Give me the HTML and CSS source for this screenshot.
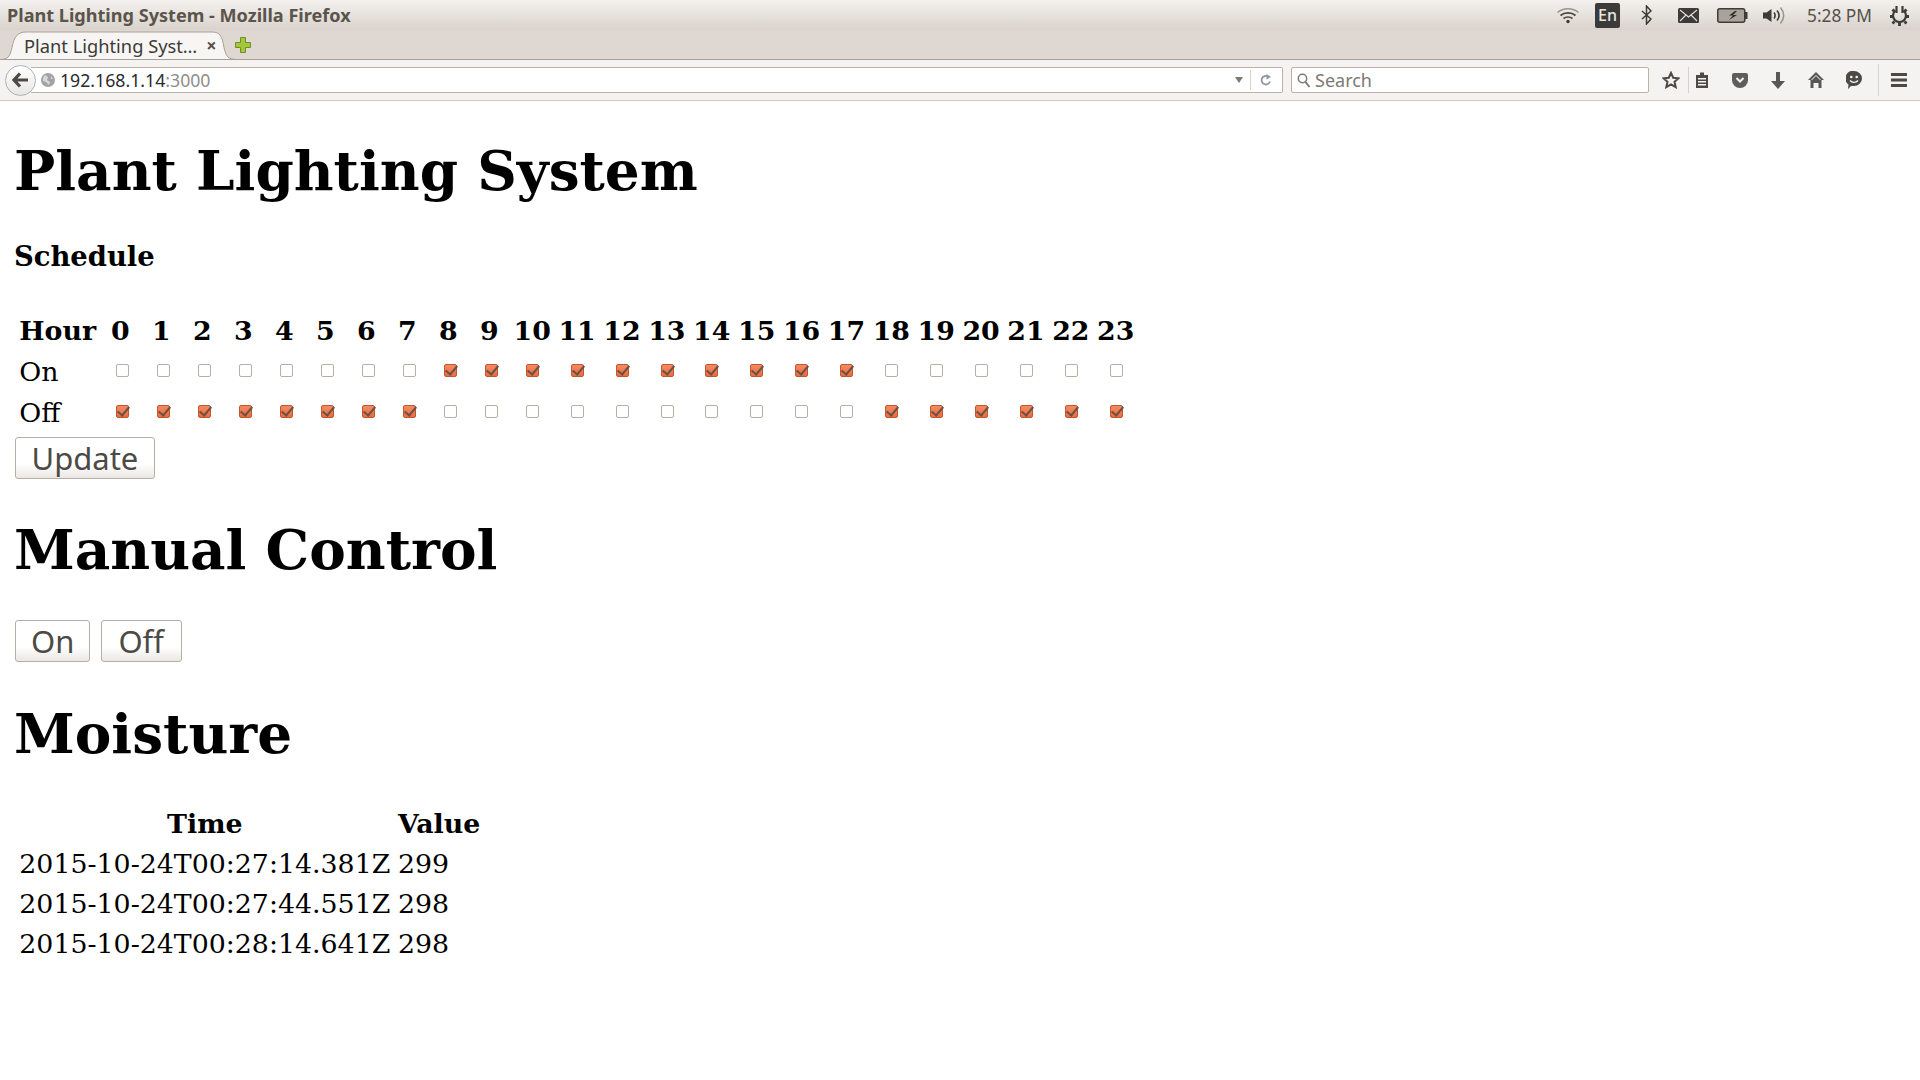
FILE: index.html
```html
<!DOCTYPE html>
<html lang="en">
<head>
<meta charset="utf-8">
<title>Plant Lighting System</title>
<link rel="stylesheet" href="styles.css">
</head>
<body>
<header class="chrome">
  <div class="titlebar">
    <span class="wintitle">Plant Lighting System - Mozilla Firefox</span>
    <div class="tray">
      <svg class="ti wifi" width="24" height="18" viewBox="0 0 24 18"><path d="M1.500 6.500C7 1.500 17 1.500 22.500 6.500" fill="none" stroke="#9a948c" stroke-width="1.600"/><g fill="none" stroke="#4a4641" stroke-width="1.700"><path d="M4.500 9.500C8.500 6 15.500 6 19.500 9.500"/><path d="M7.500 12.500C10 10.500 14 10.500 16.500 12.500"/></g><circle cx="12" cy="15.500" r="1.700" fill="#3c3b37"/></svg>
      <span class="lang">En</span>
      <svg class="ti bt" width="11" height="20" viewBox="0 0 11 20"><path d="M1 6l9 8-4.500 5V1L10 6l-9 8" fill="none" stroke="#3c3b37" stroke-width="1.500"/></svg>
      <svg class="ti mail" width="21" height="15" viewBox="0 0 21 15"><rect width="21" height="15" rx="1.500" fill="#3c3b37"/><path d="M2 2l8.500 7L19 2M2 13l6-6M19 13l-6-6" fill="none" stroke="#e6e1dc" stroke-width="1.100"/></svg>
      <svg class="ti batt" width="31" height="15" viewBox="0 0 31 15"><rect x=".75" y=".75" width="27" height="13.500" rx="2" fill="#a8a29a" stroke="#3c3b37" stroke-width="1.500"/><rect x="28" y="4" width="2.500" height="7" fill="#3c3b37"/><path d="M18 3l-6 4.500h4l-4 4.500 8-5h-4l4-4z" fill="#2c2b28"/></svg>
      <svg class="ti vol" width="25" height="19" viewBox="0 0 25 19"><path d="M1 6.500h3.500L9.500 3v13l-5-3.500H1z" fill="#3c3b37"/><g fill="none" stroke="#3c3b37" stroke-width="1.600"><path d="M12 6.500c1.500 2 1.500 4 0 6"/><path d="M15 4.500c2.500 3 2.500 7 0 10"/></g><path d="M18.500 1.500c4 5 4 11 0 16" fill="none" stroke="#9a948c" stroke-width="1.500"/></svg>
      <span class="clock">5:28 PM</span>
      <svg class="ti power" width="21" height="21" viewBox="0 0 21 21"><g fill="none" stroke="#3c3b37" stroke-width="2.200"><path d="M6.500 5.500a6.500 6.500 0 1 0 8 0"/><path d="M7.500 1v7M13.500 1v7"/></g><g stroke="#3c3b37" stroke-width="2.800"><path d="M1 11.500h3M17 11.500h3M3.500 4.500l2 2M17.500 4.500l-2 2M3.500 18.500l2-2M17.500 18.500l-2-2M10.500 18v3"/></g></svg>
    </div>
  </div>
  <div class="tabbar">
    <div class="tab">
      <svg class="tabshape" width="237" height="30" viewBox="0 0 237 30"><path d="M0 29.500c8 0 10-3 12-12 2-11 6-15.500 14-15.500h186c8 0 10 4 12 15.500 2 9 4 12 13 12z" fill="#f8f6f4" stroke="#a8a096"/></svg>
      <span class="tabtext">Plant Lighting Syst…</span>
      <span class="tabclose">×</span>
    </div>
    <svg class="newtab" width="16" height="16" viewBox="0 0 16 16"><path d="M5.500.5h5v5h5v5h-5v5h-5v-5h-5v-5h5z" fill="#a4c639" stroke="#6f8f24"/></svg>
  </div>
  <div class="navbar">
    <button class="back" type="button" aria-label="Back"><svg width="18" height="16" viewBox="0 0 18 16"><path d="M8 1.500L2 8l6 6.500M2.500 8H16" fill="none" stroke="#4d4a46" stroke-width="3.200"/></svg></button>
    <div class="urlbar">
      <svg class="globe" width="14" height="14" viewBox="0 0 14 14"><circle cx="7" cy="7" r="7" fill="#a3a3a3"/><path d="M4 2l3 2-1 3 3 2-1 3-3-3-3-1 0-3zM10 3l2 3-2 0z" fill="#d8d8d8"/></svg>
      <span class="host">192.168.1.14<span class="port">:3000</span></span>
      <span class="ddarrow"></span>
      <span class="urlsep"></span>
      <svg class="reload" width="12" height="12" viewBox="0 0 12 12"><path d="M10 7.500A4.300 4.300 0 1 1 7.800 2.300" fill="none" stroke="#8d99a3" stroke-width="1.800"/><path d="M6.500 0v5.500L11 3z" fill="#8d99a3"/></svg>
    </div>
    <div class="searchbar">
      <svg width="14" height="15" viewBox="0 0 14 15"><circle cx="5.500" cy="5.500" r="4.200" fill="none" stroke="#7d7973" stroke-width="1.500"/><path d="M8.500 9l4 5" stroke="#7d7973" stroke-width="2"/></svg>
      <span class="searchtext">Search</span>
    </div>
    <div class="tools">
      <svg class="t-star" width="18" height="18" viewBox="0 0 18 18"><path d="M9 1.800l2.200 4.900 5.300.6-4 3.500 1.200 5.300L9 13.300l-4.700 2.800 1.200-5.300-4-3.500 5.300-.6z" fill="none" stroke="#4d4a46" stroke-width="2"/></svg>
      <span class="toolsep"></span>
      <svg class="t-list" width="14" height="18" viewBox="0 0 14 18"><path d="M1 4h4V1.500h4V4h4v13H1z" fill="#4d4a46"/><path d="M3 7h8v1.500H3zM3 10h8v1.500H3zM3 13h8v1.500H3z" fill="#f5f3f1"/></svg>
      <svg class="t-pocket" width="16" height="15" viewBox="0 0 16 15"><path d="M0 2a2 2 0 0 1 2-2h12a2 2 0 0 1 2 2v5a8 8 0 0 1-16 0z" fill="#5f5d5a"/><path d="M4.500 5l3.500 3.500L11.500 5" fill="none" stroke="#f5f3f1" stroke-width="2"/></svg>
      <svg class="t-down" width="14" height="17" viewBox="0 0 14 17"><path d="M5 0h4v9h5l-7 8-7-8h5z" fill="#5a5855"/></svg>
      <svg class="t-home" width="16" height="16" viewBox="0 0 16 16"><path d="M8 0l8 8h-2.500v8h-3v-5h-5v5h-3V8H0z" fill="#5a5855"/><path d="M8 3.500L3.500 8M8 3.500L12.500 8" stroke="#f5f3f1"/></svg>
      <svg class="t-chat" width="16" height="18" viewBox="0 0 16 18"><path d="M8 0a8 7.500 0 0 1 0 15H5l-3 3 .500-4.500A7.500 7.500 0 0 1 8 0z" fill="#4d4a46"/><circle cx="5.300" cy="6" r="1.300" fill="#f5f3f1"/><circle cx="10.700" cy="6" r="1.300" fill="#f5f3f1"/><path d="M4 9.500c2 2.500 6 2.500 8 0" fill="none" stroke="#f5f3f1" stroke-width="1.300"/></svg>
      <span class="toolsep menu-sep"></span>
      <svg class="t-menu" width="16" height="14" viewBox="0 0 16 14"><path d="M0 0h16v3H0zM0 5.500h16v3H0zM0 11h16v3H0z" fill="#4d4a46"/></svg>
    </div>
  </div>
</header>
<main class="page">
  <h1 class="h-first">Plant Lighting System</h1>
  <h3>Schedule</h3>
  <table class="sched">
    <tr><th>Hour</th><th>0</th><th>1</th><th>2</th><th>3</th><th>4</th><th>5</th><th>6</th><th>7</th><th>8</th><th>9</th><th>10</th><th>11</th><th>12</th><th>13</th><th>14</th><th>15</th><th>16</th><th>17</th><th>18</th><th>19</th><th>20</th><th>21</th><th>22</th><th>23</th></tr>
    <tr><td>On</td><td class="cell"><span class="cb"></span></td><td class="cell"><span class="cb"></span></td><td class="cell"><span class="cb"></span></td><td class="cell"><span class="cb"></span></td><td class="cell"><span class="cb"></span></td><td class="cell"><span class="cb"></span></td><td class="cell"><span class="cb"></span></td><td class="cell"><span class="cb"></span></td><td class="cell"><span class="cb on"></span></td><td class="cell"><span class="cb on"></span></td><td class="cell"><span class="cb on"></span></td><td class="cell"><span class="cb on"></span></td><td class="cell"><span class="cb on"></span></td><td class="cell"><span class="cb on"></span></td><td class="cell"><span class="cb on"></span></td><td class="cell"><span class="cb on"></span></td><td class="cell"><span class="cb on"></span></td><td class="cell"><span class="cb on"></span></td><td class="cell"><span class="cb"></span></td><td class="cell"><span class="cb"></span></td><td class="cell"><span class="cb"></span></td><td class="cell"><span class="cb"></span></td><td class="cell"><span class="cb"></span></td><td class="cell"><span class="cb"></span></td></tr>
    <tr><td>Off</td><td class="cell"><span class="cb on"></span></td><td class="cell"><span class="cb on"></span></td><td class="cell"><span class="cb on"></span></td><td class="cell"><span class="cb on"></span></td><td class="cell"><span class="cb on"></span></td><td class="cell"><span class="cb on"></span></td><td class="cell"><span class="cb on"></span></td><td class="cell"><span class="cb on"></span></td><td class="cell"><span class="cb"></span></td><td class="cell"><span class="cb"></span></td><td class="cell"><span class="cb"></span></td><td class="cell"><span class="cb"></span></td><td class="cell"><span class="cb"></span></td><td class="cell"><span class="cb"></span></td><td class="cell"><span class="cb"></span></td><td class="cell"><span class="cb"></span></td><td class="cell"><span class="cb"></span></td><td class="cell"><span class="cb"></span></td><td class="cell"><span class="cb on"></span></td><td class="cell"><span class="cb on"></span></td><td class="cell"><span class="cb on"></span></td><td class="cell"><span class="cb on"></span></td><td class="cell"><span class="cb on"></span></td><td class="cell"><span class="cb on"></span></td></tr>
  </table>
  <button class="btn btn-update" type="button">Update</button>
  <h1 class="h-manual">Manual Control</h1>
  <div class="manual"><button class="btn btn-on" type="button">On</button><button class="btn btn-off" type="button">Off</button></div>
  <h1 class="h-moist">Moisture</h1>
  <table class="moist">
    <tr><th>Time</th><th>Value</th></tr>
    <tr><td>2015-10-24T00:27:14.381Z</td><td>299</td></tr>
    <tr><td>2015-10-24T00:27:44.551Z</td><td>298</td></tr>
    <tr><td>2015-10-24T00:28:14.641Z</td><td>298</td></tr>
  </table>
</main>
</body>
</html>
```
FILE: styles.css
```css
* { box-sizing: border-box; }
html, body { margin: 0; padding: 0; background: #fff; height: 1080px; overflow: hidden; }
body { font-family: "DejaVu Serif", serif; color: #000; }

.chrome { display: flex; flex-direction: column; font-family: "Noto Sans", sans-serif; }
.titlebar { height: 30px; display: flex; align-items: center; justify-content: space-between; padding-left: 7px; background: linear-gradient(#f4f1ee, #d9d3cc); }
.wintitle { font-size: 18.100px; font-weight: 700; color: #5a544c; }
.tray { display: flex; align-items: center; height: 30px; }
.ti { display: block; flex: none; }
.wifi { margin-right: 15px; }
.lang { width: 25px; height: 25px; background: #3c3b37; color: #e8e6e2; font-size: 16px; font-weight: 500; display: flex; align-items: center; justify-content: center; border-radius: 2px; margin-right: 21px; }
.bt { margin-right: 26px; }
.mail { margin-right: 18px; }
.batt { margin-right: 14px; }
.vol { margin-right: 20px; }
.clock { font-size: 17.300px; color: #55504a; margin-right: 17px; width: 65px; white-space: nowrap; }
.power { margin-right: 10px; }

.tabbar { height: 30px; background: #dfd8d2; display: flex; align-items: flex-end; border-bottom: 1px solid #a8a096; }
.tab { position: relative; width: 237px; height: 30px; margin-bottom: -1px; display: flex; align-items: center; padding-left: 24px; font-size: 18.300px; color: #3c3b37; flex: none; }
.tabshape { position: absolute; left: 0; top: 0; }
.tabtext, .tabclose { position: relative; }
.tabclose { margin-left: 9px; font-size: 18px; font-weight: 700; color: #55504a; }
.newtab { margin: 0 0 6px -2px; }

.navbar { height: 41px; background: #f5f3f1; border-bottom: 1px solid #d3cbc3; display: flex; align-items: center; padding-left: 5px; }
.back { width: 31px; height: 31px; border-radius: 50%; border: 1px solid #a9b2bb; background: linear-gradient(#fff, #e9e7e4); padding: 0; display: flex; align-items: center; justify-content: center; flex: none; margin-right: -5px; position: relative; }
.urlbar { width: 1252px; height: 26px; background: #fff; border: 1px solid #bcb2a6; border-left: 0; border-radius: 0 2px 2px 0; display: flex; align-items: center; padding-left: 10px; flex: none; }
.globe { flex: none; margin-right: 5px; }
.host { font-size: 17.700px; color: #2b2b2b; flex: 1; }
.port { color: #8e8e8e; }
.ddarrow { width: 0; height: 0; border-left: 4px solid transparent; border-right: 4px solid transparent; border-top: 6px solid #7d7973; margin-right: 7px; }
.urlsep { width: 1px; height: 20px; background: #d8d2cb; margin-right: 9px; }
.reload { margin-right: 10px; flex: none; }
.searchbar { width: 358px; height: 26px; margin-left: 8px; background: #fff; border: 1px solid #bcb2a6; border-radius: 2px; display: flex; align-items: center; padding-left: 5px; flex: none; gap: 4px; }
.searchtext { font-size: 18px; color: #7d7973; }
.tools { display: flex; align-items: center; flex: none; margin-left: 13px; }
.toolsep { width: 1px; height: 26px; background: #d8d2cb; margin: 0 6px 0 8px; }
.t-list { margin-right: 23px; }
.t-pocket { margin-right: 23px; }
.t-down { margin-right: 23px; }
.t-home { margin-right: 22px; }
.menu-sep { margin: 0 12px 0 16px; height: 32px; }

.page { padding: 0 15px; }
h1 { font-size: 54.860px; font-weight: 700; margin: 0 0 0 -1px; line-height: 61px; }
.h-first { margin-top: 39px; }
.h-manual { margin-top: 40px; }
.h-moist { margin-top: 41px; }
h3 { font-size: 27.400px; font-weight: 700; margin: 38px 0 0 -1px; line-height: 34px; }
table { border-collapse: separate; border-spacing: 2px; font-size: 26.800px; margin-left: -0.500px; }
th, td { padding: 2px 2.800px; font-weight: 400; text-align: left; line-height: 34px; }
th { font-weight: 700; text-align: center; }
.sched { margin-top: 36px; }
.sched th, .sched td { line-height: 35px; }
.cb { display: inline-block; width: 13px; height: 13px; margin: 0 8px 0 12.400px; border: 1.500px solid #b9aea1; border-radius: 2px; background: #fff; position: relative; vertical-align: 4px; }
.cb.on { border: 1px solid #c4562b; background: linear-gradient(#f58a62, #e86c40); }
.cb.on::after { content: ""; position: absolute; left: 3px; top: -2px; width: 5px; height: 10px; border: solid #6b5145; border-width: 0 2px 2px 0; transform: rotate(40deg); }
.btn { font-family: "Noto Sans", sans-serif; font-size: 31px; line-height: 38px; height: 42px; color: #4c4a46; padding: 0 15.500px; border: 1px solid #b8aea3; border-radius: 3px; background: linear-gradient(#fff 65%, #ebe7e3); display: block; }
.btn-update { margin-top: 3px; }
.btn-on { padding: 0 15px; }
.btn-off { padding: 0 17px 0 16px; }
.manual { display: flex; gap: 11px; margin-top: 40px; }
.moist { margin-top: 39px; }
```
